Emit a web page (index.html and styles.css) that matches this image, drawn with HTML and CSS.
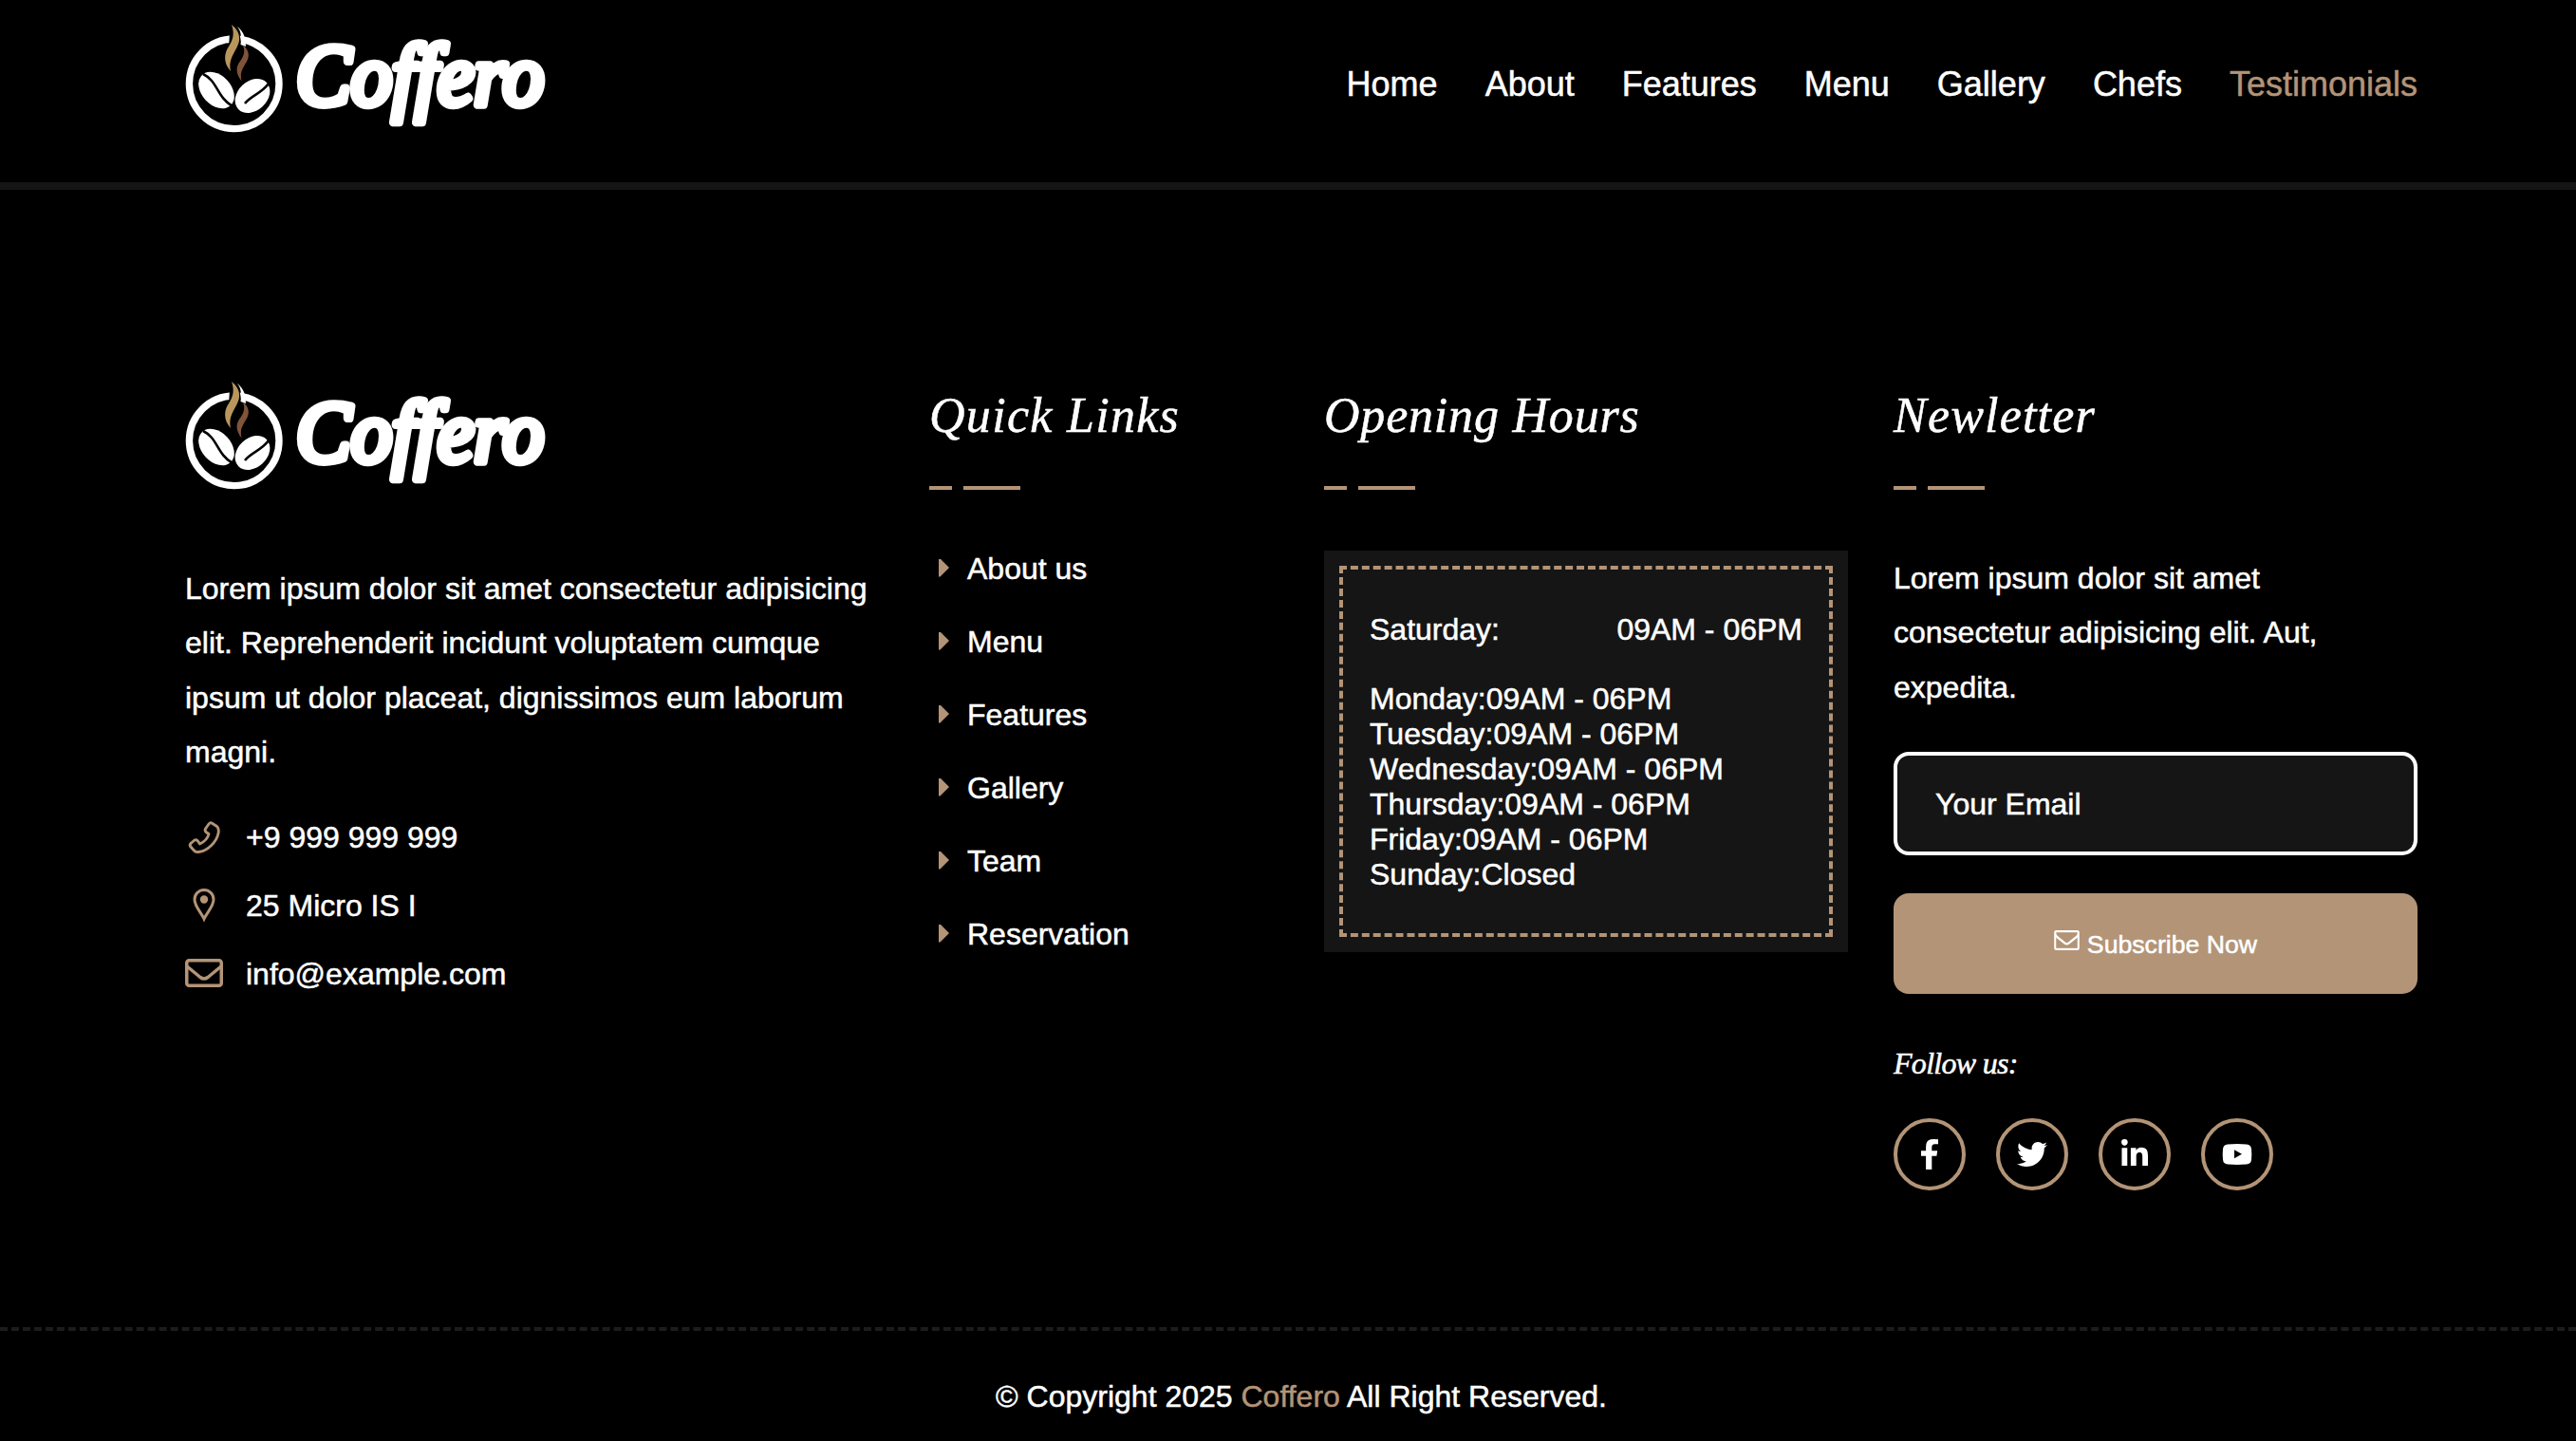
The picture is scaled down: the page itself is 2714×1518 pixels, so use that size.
FILE: index.html
```html
<!DOCTYPE html>
<html lang="en">
<head>
<meta charset="utf-8">
<title>Coffero</title>
<link rel="stylesheet" href="styles.css">
</head>
<body>
<svg class="defs" width="0" height="0">
  <defs>
    <symbol id="logo" viewBox="0 0 384 124">
      <circle cx="51.7" cy="65.3" r="47.3" fill="none" stroke="#fff" stroke-width="7.4"/>
      <path d="M47 10 L46 28 L60 27 L57 10 Z" fill="#000"/>
      <path d="M55 5 C60 9 63 14 63.500 20.500 L64 26 L58.500 24 C60 13 58 9 55 5 Z" fill="#fff"/>
      <path d="M49 3 C60 12 58 21 54 28 C49 37 46 42 48 52 C40 43 41 33 46 26 C51 18 52 12 49 3 Z" fill="#b8965c"/>
      <path d="M60.500 24 C69 31 68 38 63 45 C59 52 58 55 59.500 62.500 C52 53 54 46 59 40 C63 34 63 29 60.500 24 Z" fill="#80543a"/>
      <ellipse cx="33" cy="72" rx="22" ry="15.500" transform="rotate(47 33 72)" fill="#fff"/>
      <path d="M19 55 C34 62 34 80 50 89" fill="none" stroke="#000" stroke-width="2.600"/>
      <ellipse cx="71" cy="78" rx="20.500" ry="15.500" transform="rotate(-43 71 78)" fill="#fff"/>
      <path d="M63 86 C70 77 80 76 88 65" fill="none" stroke="#000" stroke-width="2.600"/>
      <text class="wordmark" x="117" y="87" textLength="261" lengthAdjust="spacingAndGlyphs">Coffero</text>
    </symbol>
    <symbol id="mail" viewBox="0 0 1792 1408">
      <path d="M1664 1248V480q-32 36-69 66-268 206-426 338-51 43-83 67t-86.500 48.500T897 1024h-2q-48 0-102.500-24.500T706 951t-83-67Q465 752 197 546q-37-30-69-66v768q0 13 9.500 22.500t22.500 9.500h1472q13 0 22.500-9.500t9.500-22.500zm0-1051q0-69-32-69H160q-13 0-22.500 9.500T128 160q0 168 147 284 193 152 401 317 6 5 35 29.500t46 37.500 44.500 31.500T852 887t43 9h2q20 0 43-9t50.500-27.500T1035 828t46-37.500 35-29.500q208-165 401-317 54-43 100.500-115.500T1664 197zm128-37v1088q0 66-47 113t-113 47H160q-66 0-113-47T0 1248V160Q0 94 47 47T160 0h1472q66 0 113 47t47 113z" fill="currentColor"/>
    </symbol>
  </defs>
</svg>

<header class="header">
  <a class="logo"><svg viewBox="0 0 384 124"><use href="#logo"/></svg></a>
  <nav class="nav">
    <a>Home</a><a>About</a><a>Features</a><a>Menu</a><a>Gallery</a><a>Chefs</a><a class="active">Testimonials</a>
  </nav>
</header>

<footer class="footer">
  <div class="columns">
    <section class="about">
      <a class="logo"><svg viewBox="0 0 384 124"><use href="#logo"/></svg></a>
      <p class="about-text">Lorem ipsum dolor sit amet consectetur adipisicing elit. Reprehenderit incidunt voluptatem cumque ipsum ut dolor placeat, dignissimos eum laborum magni.</p>
      <ul class="contacts">
        <li>
          <svg class="icon" viewBox="0 0 40 40" fill="none" stroke="currentColor" stroke-width="2.900" stroke-linejoin="round"><path d="M28 5 L33.500 8.500 Q36 11 35 16 C33 25 24 34.500 14 35.500 Q11 36 9 33.500 L5.500 29.500 Q4.500 27.500 6.500 26 L10 23 Q12 22 13.500 24 L15.500 27 C20 25 24 20.500 25 16.500 L22 14.500 Q20.500 13 21.500 11 L25 6 Q26.500 4 28 5 Z"/></svg>
          <span>+9 999 999 999</span>
        </li>
        <li>
          <svg class="icon" viewBox="0 0 40 40" fill="none" stroke="currentColor" stroke-width="3"><path d="M20 34 C17 27 10 21 10 13.500 A10 10 0 0 1 30 13.500 C30 21 23 27 20 34 Z"/><circle cx="20" cy="13.500" r="4.200" fill="currentColor" stroke="none"/></svg>
          <span>25 Micro IS I</span>
        </li>
        <li>
          <svg class="icon" viewBox="0 0 40 40" fill="none" stroke="currentColor" stroke-width="3.500" stroke-linejoin="round"><rect x="1.750" y="5.750" width="36.500" height="26.500" rx="2.500"/><path d="M2 12 L16 23.500 Q20 26.500 24 23.500 L38 12"/></svg>
          <span>info@example.com</span>
        </li>
      </ul>
    </section>

    <section class="links">
      <h3 class="title"><span class="t-quick">Quick Links</span></h3>
      <ul class="link-list">
        <li>About us</li><li>Menu</li><li>Features</li><li>Gallery</li><li>Team</li><li>Reservation</li>
      </ul>
    </section>

    <section class="hours">
      <h3 class="title"><span class="t-hours">Opening Hours</span></h3>
      <div class="hours-box">
        <div class="hours-inner">
          <p class="saturday"><span>Saturday:</span><span>09AM - 06PM</span></p>
          <div class="days">
            <p>Monday:09AM - 06PM</p>
            <p>Tuesday:09AM - 06PM</p>
            <p>Wednesday:09AM - 06PM</p>
            <p>Thursday:09AM - 06PM</p>
            <p>Friday:09AM - 06PM</p>
            <p>Sunday:Closed</p>
          </div>
        </div>
      </div>
    </section>

    <section class="news">
      <h3 class="title"><span class="t-news">Newletter</span></h3>
      <p class="news-text">Lorem ipsum dolor sit amet consectetur adipisicing elit. Aut, expedita.</p>
      <input class="email" type="email" placeholder="Your Email">
      <button class="subscribe"><svg viewBox="0 0 1792 1408"><use href="#mail"/></svg><span>Subscribe Now</span></button>
      <h4 class="follow"><span>Follow us:</span></h4>
      <div class="social">
        <a><svg viewBox="0 0 32 32"><path d="M25 .3V5.300H21.500Q18.300 5.300 18.300 8.300V12.300H24.200L23.400 17.700H18.300V32H12.100V17.700H7V12.300H12.100V8Q12.100 0 20 0 22.800 0 25 .3Z"/></svg></a>
        <a><svg viewBox="0 0 512 512"><path d="M459.370 151.716c.325 4.548.325 9.097.325 13.645 0 138.720-105.583 298.558-298.558 298.558-59.452 0-114.680-17.219-161.137-47.106 8.447.974 16.568 1.299 25.340 1.299 49.055 0 94.213-16.568 130.274-44.832-46.132-.975-84.792-31.188-98.112-72.772 6.498.974 12.995 1.624 19.818 1.624 9.421 0 18.843-1.300 27.614-3.573-48.081-9.747-84.143-51.980-84.143-102.985v-1.299c13.969 7.797 30.214 12.670 47.431 13.319-28.264-18.843-46.781-51.005-46.781-87.391 0-19.492 5.197-37.360 14.294-52.954 51.655 63.675 129.300 105.258 216.365 109.807-1.624-7.797-2.599-15.918-2.599-24.040 0-57.828 46.782-104.934 104.934-104.934 30.213 0 57.502 12.670 76.670 33.137 23.715-4.548 46.456-13.320 66.599-25.340-7.798 24.366-24.366 44.833-46.132 57.827 21.117-2.273 41.584-8.122 60.426-16.243-14.292 20.791-32.161 39.308-52.628 54.253z"/></svg></a>
        <a><svg viewBox="0 0 448 512"><path d="M100.280 448H7.400V148.900h92.880zM53.790 108.100C24.090 108.100 0 83.500 0 53.800a53.790 53.790 0 0 1 107.580 0c0 29.700-24.100 54.300-53.790 54.300zM447.900 448h-92.680V302.400c0-34.700-.7-79.200-48.290-79.200-48.290 0-55.690 37.700-55.690 76.700V448h-92.780V148.900h89.080v40.800h1.300c12.400-23.500 42.690-48.300 87.880-48.300 94 0 111.280 61.900 111.280 142.300V448z"/></svg></a>
        <a><svg viewBox="0 0 32 32"><path fill-rule="evenodd" d="M6 5.500Q16 4.500 26 5.500 30.700 5.800 31 10.500 31.600 16 31 21.500 30.700 26 26 26.500 16 27.400 6 26.500 1.300 26 1 21.500.4 16 1 10.500 1.300 5.800 6 5.500ZM13 11.300V20.300L21 15.800Z"/></svg></a>
      </div>
    </section>
  </div>
  <p class="copyright">© Copyright 2025 <span>Coffero</span> All Right Reserved.</p>
</footer>
</body>
</html>
```
FILE: styles.css
```css
* { box-sizing: border-box; margin: 0; padding: 0; }

body {
  background: #000;
  color: #fff;
  font: 32px/57.6px "Liberation Sans", Arial, sans-serif;
  -webkit-text-stroke: 0.5px currentColor;
  overflow: hidden;
}

ul { list-style: none; }
.defs { display: block; height: 0; }

.logo, .logo svg { display: block; width: 384px; height: 124px; }
.wordmark {
  font: italic 400 92px "Liberation Serif", serif;
  font-variant-ligatures: none;
  fill: #fff;
  -webkit-text-stroke: 0;
  stroke: #fff;
  stroke-width: 8.5px;
  stroke-linejoin: round;
}

/* Top bar */
.header {
  display: flex;
  justify-content: space-between;
  height: 200px;
  padding: 23px 167px 0 195px;
  border-bottom: 8px solid #151515;
}
.nav { display: flex; gap: 50px; padding-top: 38px; font-size: 36px; line-height: 56px; }
.active { color: #b39477; }

/* Footer columns */
.columns {
  display: grid;
  grid-template-columns: 736px 368px 552px 552px;
  column-gap: 48px;
  height: 1198px;
  padding: 199px 167px 0 195px;
}
.about-text { margin-top: 68.6px; }
.contacts { margin-top: 32.4px; }
.contacts li { display: flex; align-items: center; gap: 24px; height: 57px; margin-bottom: 15px; }
.icon { width: 40px; height: 40px; color: #b39477; margin-bottom: 2px; }

.title {
  display: flex;
  align-items: center;
  height: 117px;
  position: relative;
  padding-bottom: 40px;
  font: italic 400 52px "Liberation Serif", serif;
  white-space: nowrap;
}
.t-quick { letter-spacing: 1.3px; }
.t-hours { letter-spacing: 0.8px; }
.t-news { letter-spacing: 1.2px; }
.title::after {
  content: "";
  width: 96px;
  height: 4px;
  position: absolute;
  left: 0;
  bottom: 0;
  background: linear-gradient(90deg, #b39477 24px, transparent 24px 36px, #b39477 36px);
}
.links, .hours, .news { display: flex; flex-direction: column; }

.link-list { padding: 55px 0 0 10px; }
.link-list li { display: flex; align-items: center; gap: 19px; height: 77px; padding-bottom: 19px; }
.link-list li::before {
  content: "";
  width: 11px;
  height: 19px;
  margin-top: -4px;
  background: #b39477;
  clip-path: polygon(0 0, 14% 0, 100% 50%, 14% 100%, 0 100%);
}

.hours-box { height: 423px; margin-top: 64px; padding: 16px; background: #151515; }
.hours-inner { height: 391px; padding: 35px 28px; border: 4px dashed #b39477; }
.saturday { display: flex; justify-content: space-between; }
.days { margin-top: 25px; line-height: 37px; }

.news-text { margin-top: 64.6px; }
.email {
  width: 552px;
  height: 109px;
  margin-top: 38.4px;
  padding: 2px 40px 0;
  border: 4px solid #fff;
  border-radius: 16px;
  background: #151515;
  color: #fff;
  font: inherit;
}
.email::placeholder { color: #fff; opacity: 1; }
.subscribe {
  display: flex;
  align-items: center;
  justify-content: center;
  gap: 8px;
  height: 106px;
  margin-top: 40px;
  border: 0;
  border-radius: 16px;
  background: #b39477;
  color: #fff;
  font: 26.670px/30px "Liberation Sans", Arial, sans-serif;
}
.subscribe svg { width: 27px; height: 21px; margin-top: -7px; stroke: currentColor; stroke-width: 30px; }
.subscribe span { margin-top: 2px; }
.follow { height: 40px; margin-top: 53px; font: italic 400 32px/40px "Liberation Serif", serif; letter-spacing: -0.7px; }
.social { display: flex; gap: 32px; margin-top: 38px; }
.social a { display: flex; align-items: center; justify-content: center; width: 76px; height: 76px; border: 4px solid #b39477; border-radius: 50%; }
.social svg { width: 32px; height: 32px; fill: #fff; }

.copyright { height: 120px; padding: 41px 167px 0 195px; border-top: 4px dashed #1c1c1c; text-align: center; }
.copyright span { color: #b39477; }
```
